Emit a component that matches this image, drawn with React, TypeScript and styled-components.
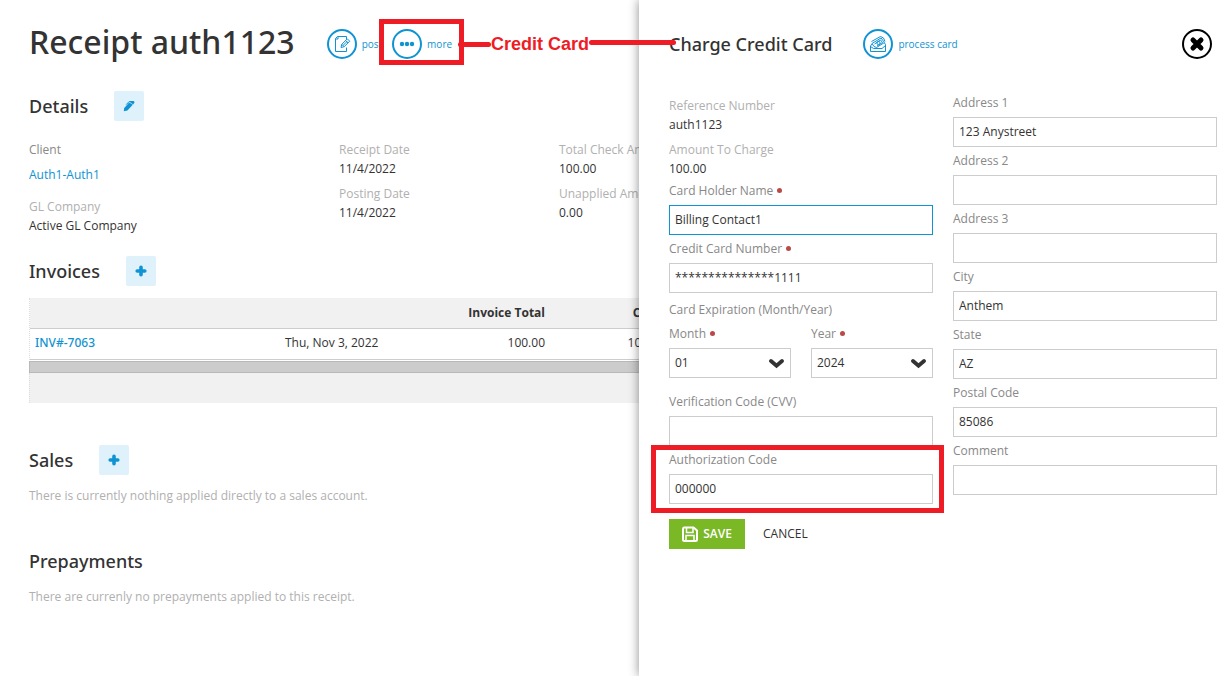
import React from "react";
import styled, { createGlobalStyle, css } from "styled-components";

const blue = "#0f93d2";
const red = "#ee1c25";

const GlobalStyle = createGlobalStyle`
  * { box-sizing: border-box; }
  body {
    margin: 0;
    background: #fff;
    color: #333;
    font-family: "Open Sans", "Noto Sans", sans-serif;
    font-size: 12px;
    line-height: 19px;
  }
  button, input, select { font: inherit; color: inherit; }
  button { cursor: pointer; }
  a { color: ${blue}; text-decoration: none; }
`;

const Page = styled.div`
  position: relative;
  display: flex;
  min-height: 100vh;
  overflow: hidden;
`;

const Main = styled.main`
  flex: 1;
  min-width: 0;
  overflow: hidden;
  padding: 20px 0 20px 29px;
`;

const Panel = styled.aside`
  position: relative;
  flex: none;
  width: min(580px, 60%);
  padding: 29px 2px 20px 30px;
  background: #fff;
  box-shadow: 0 0 10px rgba(0, 0, 0, 0.45);
`;

const MainHeader = styled.header`
  display: flex;
  align-items: center;
  height: 48px;
  gap: 32px;
  margin-bottom: 23px;
  white-space: nowrap;
`;

const Title = styled.h1`
  margin: 0;
  padding-bottom: 4px;
  font-family: "Noto Sans", "Open Sans", sans-serif;
  font-size: 32px;
  line-height: 44px;
  font-weight: 500;
`;

const Actions = styled.div`
  display: flex;
  gap: 10px;
`;

const ActionButton = styled.button`
  position: relative;
  display: flex;
  align-items: center;
  gap: 5px;
  padding: 0;
  border: 0;
  background: none;
  color: ${blue};
  font-size: 10px;
  white-space: nowrap;
`;

const Circle = styled.span`
  display: flex;
  align-items: center;
  justify-content: center;
  width: 30px;
  height: 30px;
  border: 2px solid currentColor;
  border-radius: 50%;
`;

const SectionHead = styled.div<{ $top?: number }>`
  display: flex;
  align-items: center;
  gap: 26px;
  height: 30px;
  margin-top: ${(p) => p.$top ?? 0}px;
`;

const SectionTitle = styled.h2`
  margin: 0;
  font-family: "Noto Sans", "Open Sans", sans-serif;
  font-size: 18px;
  line-height: 30px;
  font-weight: 500;
`;

const SquareButton = styled.button`
  display: flex;
  align-items: center;
  justify-content: center;
  width: 30px;
  height: 30px;
  padding: 0;
  border: 0;
  border-radius: 2px;
  background: #dff1fb;
  color: ${blue};
`;

const DetailGrid = styled.div`
  display: grid;
  grid-template-columns: 310px 220px 220px;
  margin-top: 13px;
`;

const Pair = styled.dl`
  margin: 0;
  padding-top: 6px;
  white-space: nowrap;
`;

const ReadOnly = styled.div`
  height: 88px;
  padding-top: 1px;
`;

const Term = styled.dt<{ $dark?: boolean }>`
  color: ${(p) => (p.$dark ? "#888" : "#b0b0b0")};
`;

const Value = styled.dd<{ $tall?: boolean }>`
  margin: 0;
  line-height: ${(p) => (p.$tall ? 32 : 19)}px;
`;

const Table = styled.table`
  width: 760px;
  margin-top: 12px;
  table-layout: fixed;
  border-collapse: separate;
  border-spacing: 0;
  border-left: 1px dotted #ddd;
`;

const cell = css<{ $right?: boolean }>`
  height: 31px;
  border-bottom: 1px solid #ccc;
  text-align: ${(p) => (p.$right ? "right" : "left")};
  white-space: nowrap;
`;

const HeadCell = styled.th<{ $right?: boolean }>`
  ${cell}
  padding: 0 5px 2px;
  background: #f1f1f1;
  font-weight: 700;
`;

const Cell = styled.td<{ $right?: boolean }>`
  ${cell}
  padding: 0 5px 4px;
`;

const InvoiceLink = styled.a`
  font-family: "Noto Sans", "Open Sans", sans-serif;
  font-weight: 500;
`;

const ScrollBar = styled.div`
  width: 760px;
  height: 12px;
  margin-top: 1px;
  border: 1px solid #b8b8b8;
  background: #ccc;
`;

const TableFoot = styled.div`
  width: 760px;
  height: 30px;
  border-left: 1px dotted #ddd;
  background: #f1f1f1;
`;

const Note = styled.p`
  margin: 11px 0 0;
  color: #b0b0b0;
`;

const PanelHeader = styled.header`
  display: flex;
  align-items: center;
  gap: 31px;
  height: 30px;
  margin-bottom: 30px;
  white-space: nowrap;
`;

const CloseButton = styled.button`
  display: flex;
  margin-left: auto;
  margin-right: 5px;
  padding: 0;
  border: 0;
  background: none;
  color: #000;
`;

const Form = styled.form`
  display: grid;
  grid-template-columns: 1fr 1fr;
  gap: 20px;
  align-items: start;
`;

const Column = styled.div`
  display: flex;
  flex-direction: column;
  min-width: 0;
`;

const FieldBox = styled.div<{ $top?: number }>`
  position: relative;
  min-width: 0;
  margin-top: ${(p) => p.$top ?? 0}px;
`;

const Label = styled.label`
  display: flex;
  align-items: center;
  gap: 4px;
  height: 28px;
  padding-bottom: 1px;
  color: #888;
`;

const Dot = styled.span`
  width: 5px;
  height: 5px;
  border-radius: 50%;
  background: #b94a48;
`;

const control = css`
  display: block;
  width: 100%;
  height: 30px;
  padding: 0 5px 2px;
  border: 1px solid #ccc;
  border-radius: 0;
  background: #fff;
  outline: none;
`;

const Input = styled.input<{ $active?: boolean }>`
  ${control}
  border-color: ${(p) => (p.$active ? blue : "#ccc")};
`;

const Select = styled.select`
  ${control}
  appearance: none;
`;

const SelectWrap = styled.div`
  position: relative;
  svg {
    position: absolute;
    right: 6px;
    top: 10px;
    pointer-events: none;
  }
`;

const Legend = styled.div`
  padding-top: 7px;
  line-height: 20px;
  color: #888;
`;

const Expiry = styled.div`
  display: grid;
  grid-template-columns: 1fr 1fr;
  gap: 20px;
`;

const Buttons = styled.div`
  display: flex;
  gap: 18px;
  margin-top: 15px;
`;

const SaveButton = styled.button`
  display: flex;
  align-items: center;
  justify-content: center;
  gap: 5px;
  width: 76px;
  height: 30px;
  padding: 0 0 1px;
  border: 0;
  background: #7ab826;
  color: #fff;
  font-weight: 600;
`;

const CancelButton = styled.button`
  padding: 0 0 2px;
  border: 0;
  background: none;
  font-weight: 500;
`;

const MoreMark = styled.span`
  position: absolute;
  inset: -10px -12px -6px -13px;
  border: 5px solid ${red};
`;

const CodeMark = styled.span`
  position: absolute;
  inset: -1px -11px -9px -18px;
  border: 5px solid ${red};
  pointer-events: none;
`;

const Callout = styled.div`
  position: absolute;
  left: 458px;
  top: 32px;
  display: flex;
  align-items: center;
  color: ${red};
  font: bold 18px/24px "Liberation Sans", Arial, sans-serif;
  white-space: nowrap;
`;

const CalloutLine = styled.span<{ $width: number; $raised?: boolean }>`
  width: ${(p) => p.$width}px;
  height: 5px;
  margin-bottom: ${(p) => (p.$raised ? 4 : 0)}px;
  border-radius: 3px;
  background: ${red};
`;

const Plus = () => (
  <svg width="12" height="12" viewBox="0 0 12 12" aria-hidden="true">
    <path d="M6 2.2v7.6M2.2 6h7.6" stroke="currentColor" strokeWidth="3.6" strokeLinecap="round" />
  </svg>
);

const Pencil = () => (
  <svg width="12" height="12" viewBox="0 0 12 12" aria-hidden="true">
    <path d="M.8 11.2L1.2 8L6.2 2.6L9.8 4.8L4.4 10.4zM7 2.2L8.2 1H10.8L11.6 2.2L10.200 4.400z" fill="currentColor" />
    <path d="M3.200 4.600L6.200 1.500H8.500" fill="none" stroke="currentColor" />
  </svg>
);

const PostIcon = () => (
  <svg width="18" height="18" viewBox="0 0 18 18" fill="none" stroke="currentColor" aria-hidden="true">
    <path d="M13.500 4V1.500H4.500L2.500 3.500V16.500H13.500V12.500M2.500 4H5V1.500" />
    <path d="M8 12.500l.8-3.200 5.500-5.500 2.400 2.400-5.500 5.500zM8.800 9.300l2.400 2.400M12.600 5.500l2.400 2.400M10 10.500l4-4" />
  </svg>
);

const Dots = () => (
  <svg width="16" height="6" viewBox="0 0 16 6" fill="currentColor" aria-hidden="true">
    <circle cx="3" cy="3" r="2.2" />
    <circle cx="8" cy="3" r="2.2" />
    <circle cx="13" cy="3" r="2.2" />
  </svg>
);

const ProcessIcon = () => (
  <svg width="18" height="18" viewBox="0 0 18 18" fill="none" stroke="currentColor" aria-hidden="true">
    <path d="M3 9L1.500 11V16.500H16.500V9.500L15.500 8M1.500 11.500L4.500 13.500H13L16.500 10.500" />
    <path d="M3 8.500L12 3L15.500 7.500L7.500 12.500L5 11.500zM2.500 6.500L11.500 1.500L14.500 3L16 6.500M5.500 9L11.500 5L13.500 7.500L8 11" />
    <circle cx="9.500" cy="8" r="1.600" />
  </svg>
);

const CloseIcon = () => (
  <svg width="16" height="16" viewBox="0 0 16 16" aria-hidden="true">
    <path d="M4 4l8 8M12 4l-8 8" stroke="currentColor" strokeWidth="5" strokeLinecap="round" />
  </svg>
);

const Chevron = () => (
  <svg width="16" height="11" viewBox="0 0 16 11" fill="none" aria-hidden="true">
    <path d="M2 3L7.500 7.800L13 3" stroke="#333" strokeWidth="3.8" strokeLinecap="round" />
  </svg>
);

const Disk = () => (
  <svg width="16" height="16" viewBox="0 0 16 16" fill="none" stroke="#fff" strokeWidth="2" aria-hidden="true">
    <path d="M2 1.500H11.500L15 4.500V13.500Q15 15 13.500 15H2.500Q1 15 1 13.500V3Q1 1.500 2 1.500Z" />
    <path d="M4.500 2V6.500H11V2M4 14V9.500H12V14" strokeWidth="1.5" />
  </svg>
);

function Detail({ term, children }: { term: string; children: React.ReactNode }) {
  return (
    <Pair>
      <Term>{term}</Term>
      <Value>{children}</Value>
    </Pair>
  );
}

type FieldProps = {
  id: string;
  label: string;
  value?: string;
  required?: boolean;
  active?: boolean;
  top?: number;
  children?: React.ReactNode;
};

function Field({ id, label, value = "", required, active, top, children }: FieldProps) {
  return (
    <FieldBox $top={top}>
      <Label htmlFor={id}>
        {label}
        {required && <Dot />}
      </Label>
      <Input id={id} defaultValue={value} $active={active} />
      {children}
    </FieldBox>
  );
}

function SelectField({ id, label, value }: { id: string; label: string; value: string }) {
  return (
    <FieldBox>
      <Label htmlFor={id}>
        {label}
        <Dot />
      </Label>
      <SelectWrap>
        <Select id={id} defaultValue={value}>
          <option>{value}</option>
        </Select>
        <Chevron />
      </SelectWrap>
    </FieldBox>
  );
}

export default function App() {
  return (
    <Page>
      <GlobalStyle />
      <Main>
        <MainHeader>
          <Title>Receipt auth1123</Title>
          <Actions>
            <ActionButton type="button">
              <Circle><PostIcon /></Circle>
              post
            </ActionButton>
            <ActionButton type="button">
              <Circle><Dots /></Circle>
              more
              <MoreMark />
            </ActionButton>
          </Actions>
        </MainHeader>

        <SectionHead>
          <SectionTitle>Details</SectionTitle>
          <SquareButton type="button" aria-label="Edit details"><Pencil /></SquareButton>
        </SectionHead>
        <DetailGrid>
          <div>
            <Pair>
              <Term $dark>Client</Term>
              <Value $tall><a href="#client">Auth1-Auth1</a></Value>
            </Pair>
            <Detail term="GL Company">Active GL Company</Detail>
          </div>
          <div>
            <Detail term="Receipt Date">11/4/2022</Detail>
            <Detail term="Posting Date">11/4/2022</Detail>
          </div>
          <div>
            <Detail term="Total Check Amount">100.00</Detail>
            <Detail term="Unapplied Amount">0.00</Detail>
          </div>
        </DetailGrid>

        <SectionHead $top={21}>
          <SectionTitle>Invoices</SectionTitle>
          <SquareButton type="button" aria-label="Add invoice"><Plus /></SquareButton>
        </SectionHead>
        <Table>
          <colgroup>
            <col width="250" />
            <col width="150" />
            <col width="120" />
            <col width="120" />
            <col />
          </colgroup>
          <thead>
            <tr>
              <HeadCell />
              <HeadCell />
              <HeadCell $right>Invoice Total</HeadCell>
              <HeadCell $right>Costs</HeadCell>
              <HeadCell />
            </tr>
          </thead>
          <tbody>
            <tr>
              <Cell><InvoiceLink href="#invoice">INV#-7063</InvoiceLink></Cell>
              <Cell>Thu, Nov 3, 2022</Cell>
              <Cell $right>100.00</Cell>
              <Cell $right>100.00</Cell>
              <Cell />
            </tr>
          </tbody>
        </Table>
        <ScrollBar />
        <TableFoot />

        <SectionHead $top={42}>
          <SectionTitle>Sales</SectionTitle>
          <SquareButton type="button" aria-label="Add sale"><Plus /></SquareButton>
        </SectionHead>
        <Note>There is currently nothing applied directly to a sales account.</Note>

        <SectionHead $top={41}>
          <SectionTitle>Prepayments</SectionTitle>
        </SectionHead>
        <Note>There are currenly no prepayments applied to this receipt.</Note>
      </Main>

      <Panel>
        <PanelHeader>
          <SectionTitle>Charge Credit Card</SectionTitle>
          <ActionButton type="button">
            <Circle><ProcessIcon /></Circle>
            process card
          </ActionButton>
          <CloseButton type="button" aria-label="Close">
            <Circle><CloseIcon /></Circle>
          </CloseButton>
        </PanelHeader>
        <Form>
          <Column>
            <ReadOnly>
              <Detail term="Reference Number">auth1123</Detail>
              <Detail term="Amount To Charge">100.00</Detail>
            </ReadOnly>
            <Field id="holder" label="Card Holder Name" value="Billing Contact1" required active />
            <Field id="number" label="Credit Card Number" value="***************1111" required />
            <Legend>Card Expiration (Month/Year)</Legend>
            <Expiry>
              <SelectField id="month" label="Month" value="01" />
              <SelectField id="year" label="Year" value="2024" />
            </Expiry>
            <Field id="cvv" label="Verification Code (CVV)" top={10} />
            <Field id="auth" label="Authorization Code" value="000000">
              <CodeMark />
            </Field>
            <Buttons>
              <SaveButton type="button"><Disk />SAVE</SaveButton>
              <CancelButton type="button">CANCEL</CancelButton>
            </Buttons>
          </Column>
          <Column>
            <Field id="address1" label="Address 1" value="123 Anystreet" />
            <Field id="address2" label="Address 2" />
            <Field id="address3" label="Address 3" />
            <Field id="city" label="City" value="Anthem" />
            <Field id="state" label="State" value="AZ" />
            <Field id="postal" label="Postal Code" value="85086" />
            <Field id="comment" label="Comment" />
          </Column>
        </Form>
      </Panel>

      <Callout>
        <CalloutLine $width={33} />
        Credit Card
        <CalloutLine $width={87} $raised />
      </Callout>
    </Page>
  );
}
